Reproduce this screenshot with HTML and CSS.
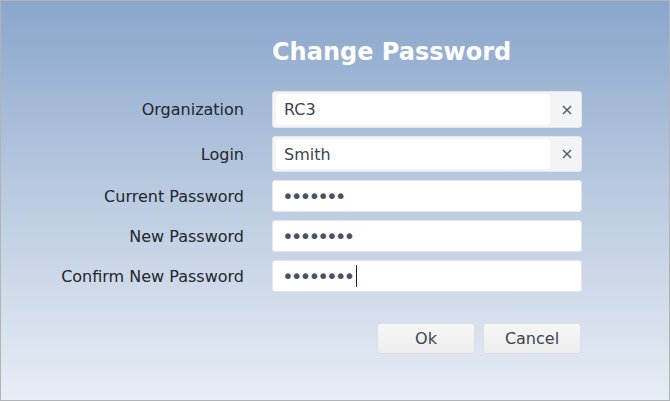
FILE: index.html
```html
<!DOCTYPE html>
<html>
<head>
<meta charset="utf-8">
<link rel="stylesheet" href="styles.css">
</head>
<body>
<div class="dialog">
  <h1 class="title">Change Password</h1>
  <div class="form">
    <label class="label">Organization</label>
    <div class="field clearable">
      <div class="field-inner">RC3</div>
      <div class="clear"><svg width="10" height="10" viewBox="0 0 10 10"><path d="M1 1L9 9M9 1L1 9" stroke="#4e5561" stroke-width="1.4" fill="none"/></svg></div>
    </div>
    <label class="label">Login</label>
    <div class="field clearable">
      <div class="field-inner">Smith</div>
      <div class="clear"><svg width="10" height="10" viewBox="0 0 10 10"><path d="M1 1L9 9M9 1L1 9" stroke="#4e5561" stroke-width="1.4" fill="none"/></svg></div>
    </div>
    <label class="label">Current Password</label>
    <div class="field pw"><span class="dots">•••••••</span></div>
    <label class="label">New Password</label>
    <div class="field pw"><span class="dots">••••••••</span></div>
    <label class="label">Confirm New Password</label>
    <div class="field pw"><span class="dots">••••••••</span><span class="caret"></span></div>
  </div>
  <div class="buttons">
    <button class="btn">Ok</button>
    <button class="btn">Cancel</button>
  </div>
</div>
</body>
</html>
```
FILE: styles.css
```css
html, body {
  margin: 0;
  padding: 0;
}
body {
  font-family: "DejaVu Sans", Verdana, sans-serif;
}
.dialog {
  box-sizing: border-box;
  width: 670px;
  height: 401px;
  border: 1px solid #b3b3b3;
  background: linear-gradient(to bottom, #89a6cc 0%, #b7c8df 45%, #e7edf5 100%);
  padding-top: 34px;
}
.title {
  margin: 0 0 0 271px;
  font-size: 24px;
  font-weight: bold;
  color: #ffffff;
  line-height: 34px;
  height: 34px;
}
.form {
  margin-top: 22px;
  display: grid;
  grid-template-columns: 243px 310px;
  grid-template-rows: 37px 36px 32px 32px 32px;
  column-gap: 28px;
  row-gap: 8px;
}
.label {
  display: flex;
  align-items: center;
  justify-content: flex-end;
  font-size: 16px;
  color: #23262b;
}
.field {
  box-sizing: border-box;
  background: #ffffff;
  border: 1px solid #e3e5e8;
  border-radius: 3px;
  display: flex;
  align-items: center;
  font-size: 16px;
  color: #3d4450;
}
.clearable {
  background: #f3f4f5;
  padding: 2px 0 2px 3px;
}
.field-inner {
  flex: 1;
  align-self: stretch;
  background: #ffffff;
  border-radius: 3px;
  display: flex;
  align-items: center;
  padding-left: 8px;
}
.clear {
  width: 29px;
  display: flex;
  justify-content: center;
  align-items: center;
  padding-left: 2px;
}
.pw {
  padding-left: 9px;
}
.dots {
  font-size: 20px;
  letter-spacing: -3px;
  color: #4a5262;
  line-height: 20px;
}
.caret {
  display: inline-block;
  width: 1px;
  height: 22px;
  background: #222;
  margin-left: 4px;
}
.buttons {
  display: flex;
  gap: 8px;
  margin-top: 31px;
  margin-left: 376px;
}
.btn {
  box-sizing: border-box;
  width: 98px;
  height: 31px;
  border: 1px solid #dcdee1;
  border-radius: 3px;
  background: linear-gradient(to bottom, #f6f6f6, #eeeeee);
  font-family: "DejaVu Sans", Verdana, sans-serif;
  font-size: 16px;
  color: #3d4450;
  padding: 0;
}
```
